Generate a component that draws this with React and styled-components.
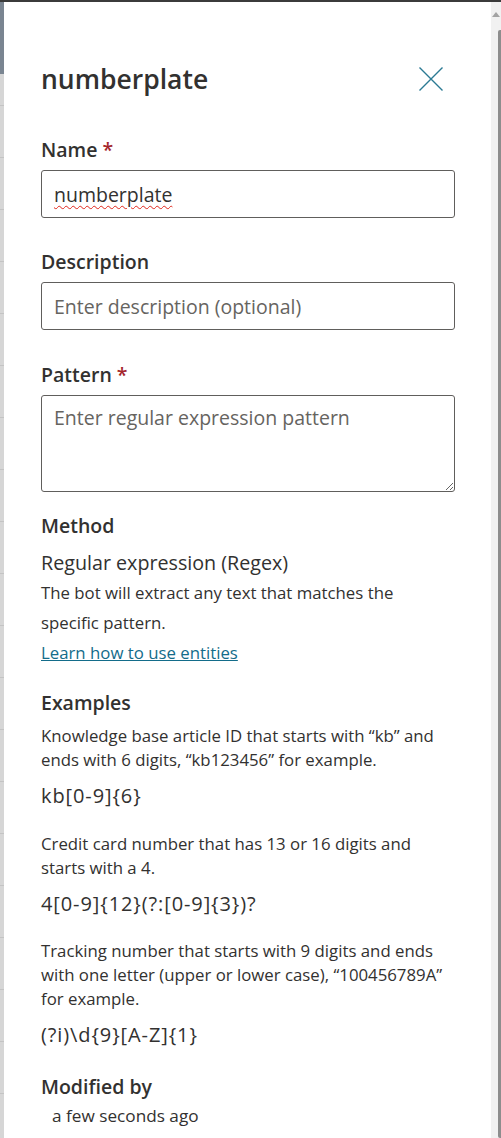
import React from 'react';
import styled, { createGlobalStyle } from 'styled-components';

const GlobalStyle = createGlobalStyle`
  html, body {
    margin: 0;
    padding: 0;
    background: #ffffff;
  }
  body {
    font-family: "Open Sans", "Noto Sans", "Liberation Sans", sans-serif;
    color: #323130;
  }
  * { box-sizing: border-box; }
`;

const Page = styled.div`
  width: 501px;
  height: 1138px;
  display: flex;
  flex-direction: column;
  overflow: hidden;
`;

const TopEdge = styled.div`
  height: 2px;
  background: #3b3b3b;
  flex: none;
`;

const Body = styled.div`
  flex: 1;
  display: flex;
  min-height: 0;
`;

const Backdrop = styled.div`
  width: 4px;
  flex: none;
  background:
    linear-gradient(#7a8591, #7a8591) top / 100% 72px no-repeat,
    repeating-linear-gradient(
      to bottom,
      #d6d6d6 0px,
      #d6d6d6 51px,
      #c4c4c4 51px,
      #c4c4c4 52px
    );
`;

const Panel = styled.div`
  flex: 1;
  padding: 0 36px 0 37px;
  background: #ffffff;
`;

const Scrollbar = styled.div`
  width: 10px;
  flex: none;
  background: #f1f1f1;
  display: flex;
  flex-direction: column;
  align-items: flex-end;
`;

const ScrollArrow = styled.div`
  width: 0;
  height: 0;
  margin: 10px 1px 0 0;
  border-left: 4px solid transparent;
  border-right: 4px solid transparent;
  border-bottom: 5px solid #a3a3a3;
`;

const ScrollThumb = styled.div`
  width: 3px;
  flex: 1;
  margin-top: 13px;
  background: #8d8d8d;
  border-radius: 2px 0 0 2px;
`;

const Header = styled.div`
  display: flex;
  align-items: center;
  justify-content: space-between;
  padding-top: 57px;
`;

const Title = styled.h1`
  margin: 0;
  font-size: 26.5px;
  line-height: 40px;
  font-weight: 600;
  color: #323130;
`;

const CloseButton = styled.button`
  border: none;
  background: none;
  padding: 0;
  margin-right: 11px;
  width: 26px;
  height: 26px;
  display: flex;
  align-items: center;
  justify-content: center;
  cursor: pointer;
`;

const Field = styled.div`
  margin-top: ${({ $top }) => $top}px;
`;

const Label = styled.div`
  font-size: 19.5px;
  line-height: 28px;
  font-weight: 600;
  color: #323130;
  margin-bottom: ${({ $gap }) => ($gap ?? 6)}px;
`;

const Required = styled.span`
  color: #a4262c;
  margin-left: 5px;
`;

const InputBox = styled.div`
  height: 48px;
  border: 1px solid #605e5c;
  border-radius: 3px;
  padding: 0 12px;
  display: flex;
  align-items: center;
  font-size: 19.5px;
  color: #323130;
`;

const Misspelled = styled.span`
  text-decoration: underline wavy #e0261b;
  text-decoration-thickness: 1px;
  text-underline-offset: 3px;
`;

const TextInput = styled.input`
  display: block;
  width: 100%;
  height: 48px;
  border: 1px solid #605e5c;
  border-radius: 3px;
  padding: 0 12px;
  font-family: inherit;
  font-size: 19.5px;
  color: #323130;
  outline: none;

  &::placeholder {
    color: #66645f;
  }
`;

const TextArea = styled.textarea`
  display: block;
  width: 100%;
  height: 97px;
  border: 1px solid #605e5c;
  border-radius: 3px;
  padding: 8px 12px;
  font-family: inherit;
  font-size: 19.5px;
  line-height: 28px;
  color: #323130;
  resize: vertical;
  outline: none;

  &::placeholder {
    color: #66645f;
  }
`;

const Method = styled.div`
  font-size: 19.7px;
  line-height: 30px;
  margin-top: 8px;
`;

const Loose = styled.p`
  margin: 0;
  font-size: 16.8px;
  line-height: 30px;
`;

const Link = styled.a`
  display: block;
  font-size: 16.8px;
  line-height: 30px;
  color: #136c8a;
  text-decoration: underline;
`;

const Example = styled.div`
  margin-top: ${({ $top }) => $top}px;
`;

const ExampleText = styled.p`
  margin: 0;
  font-size: 16.8px;
  line-height: 24px;
`;

const Code = styled.div`
  margin-top: 10px;
  font-size: 20px;
  line-height: 28px;
  letter-spacing: 0.9px;
`;

const Modified = styled.div`
  padding-left: 11px;
  font-size: 17.2px;
  line-height: 24px;
  margin-top: 3px;
`;

const CloseIcon = () => (
  <svg width="26" height="26" viewBox="0 0 26 26" fill="none">
    <path d="M1.5 1.5 L24.5 24.5 M24.5 1.5 L1.5 24.5" stroke="#2b7a93" strokeWidth="1.4" />
  </svg>
);

const examples = [
  {
    text: 'Knowledge base article ID that starts with “kb” and ends with 6 digits, “kb123456” for example.',
    code: 'kb[0-9]{6}',
    top: 7,
  },
  {
    text: 'Credit card number that has 13 or 16 digits and starts with a 4.',
    code: '4[0-9]{12}(?:[0-9]{3})?',
    top: 22,
  },
  {
    text: 'Tracking number that starts with 9 digits and ends with one letter (upper or lower case), “100456789A” for example.',
    code: '(?i)\\d{9}[A-Z]{1}',
    top: 21,
  },
];

const App = () => (
  <>
    <GlobalStyle />
    <Page>
      <TopEdge />
      <Body>
        <Backdrop />
        <Panel>
          <Header>
            <Title>numberplate</Title>
            <CloseButton aria-label="Close">
              <CloseIcon />
            </CloseButton>
          </Header>

          <Field $top={37}>
            <Label>Name<Required>*</Required></Label>
            <InputBox>
              <Misspelled>numberplate</Misspelled>
            </InputBox>
          </Field>

          <Field $top={30}>
            <Label>Description</Label>
            <TextInput placeholder="Enter description (optional)" />
          </Field>

          <Field $top={31}>
            <Label>Pattern<Required>*</Required></Label>
            <TextArea placeholder="Enter regular expression pattern" />
          </Field>

          <Field $top={20}>
            <Label $gap={0}>Method</Label>
            <Method>Regular expression (Regex)</Method>
            <Loose>The bot will extract any text that matches the specific pattern.</Loose>
            <Link href="#">Learn how to use entities</Link>
          </Field>

          <Field $top={21}>
            <Label $gap={0}>Examples</Label>
            {examples.map((ex) => (
              <Example key={ex.code} $top={ex.top}>
                <ExampleText>{ex.text}</ExampleText>
                <Code>{ex.code}</Code>
              </Example>
            ))}
          </Field>

          <Field $top={24}>
            <Label $gap={0}>Modified by</Label>
            <Modified>a few seconds ago</Modified>
          </Field>
        </Panel>
        <Scrollbar>
          <ScrollArrow />
          <ScrollThumb />
        </Scrollbar>
      </Body>
    </Page>
  </>
);

export default App;
